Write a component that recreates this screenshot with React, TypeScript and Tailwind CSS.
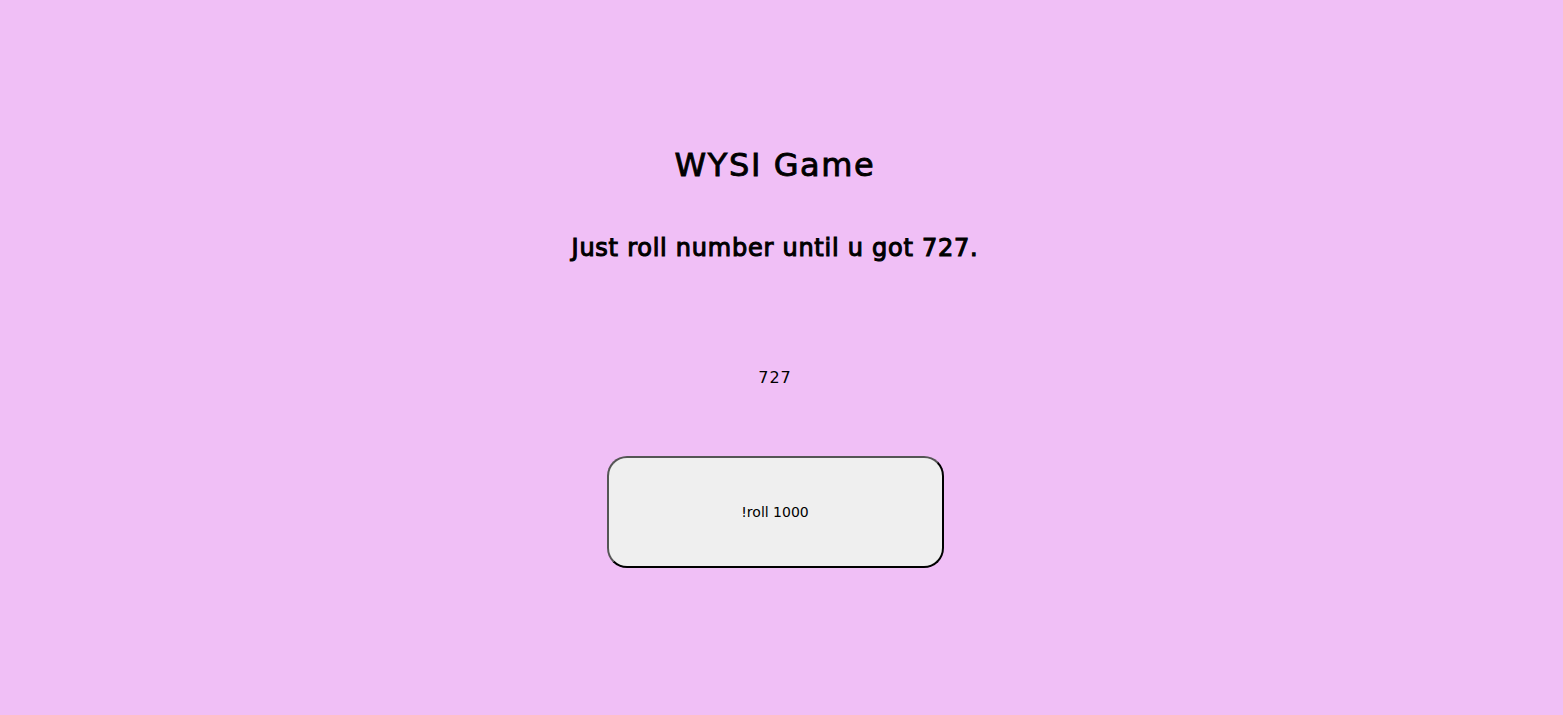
export default function App() {
  return (
    <div className="min-h-[715px] w-full bg-[#f0bff6] font-['DejaVu_Sans',sans-serif] text-black">
      <div className="w-[1550px] flex flex-col items-center">
        <h1 className="mt-[146px] text-[32px] leading-[38px] font-normal tracking-[1.6px] [-webkit-text-stroke:0.9px_black]">WYSI Game</h1>
        <h2 className="mt-[50px] text-[24px] leading-[29px] font-normal tracking-[0.75px] [-webkit-text-stroke:1.1px_black]">Just roll number until u got 727.</h2>
        <div className="mt-[105px] text-[16px] leading-[19px] tracking-[1px]">727</div>
        <button className="mt-[69px] w-[337px] h-[112px] rounded-[20px] bg-[#efefef] border-2 border-t-[#555] border-l-[#555] border-r-black border-b-black text-[14px] font-['DejaVu_Sans',sans-serif]">
          !roll 1000
        </button>
      </div>
    </div>
  );
}
